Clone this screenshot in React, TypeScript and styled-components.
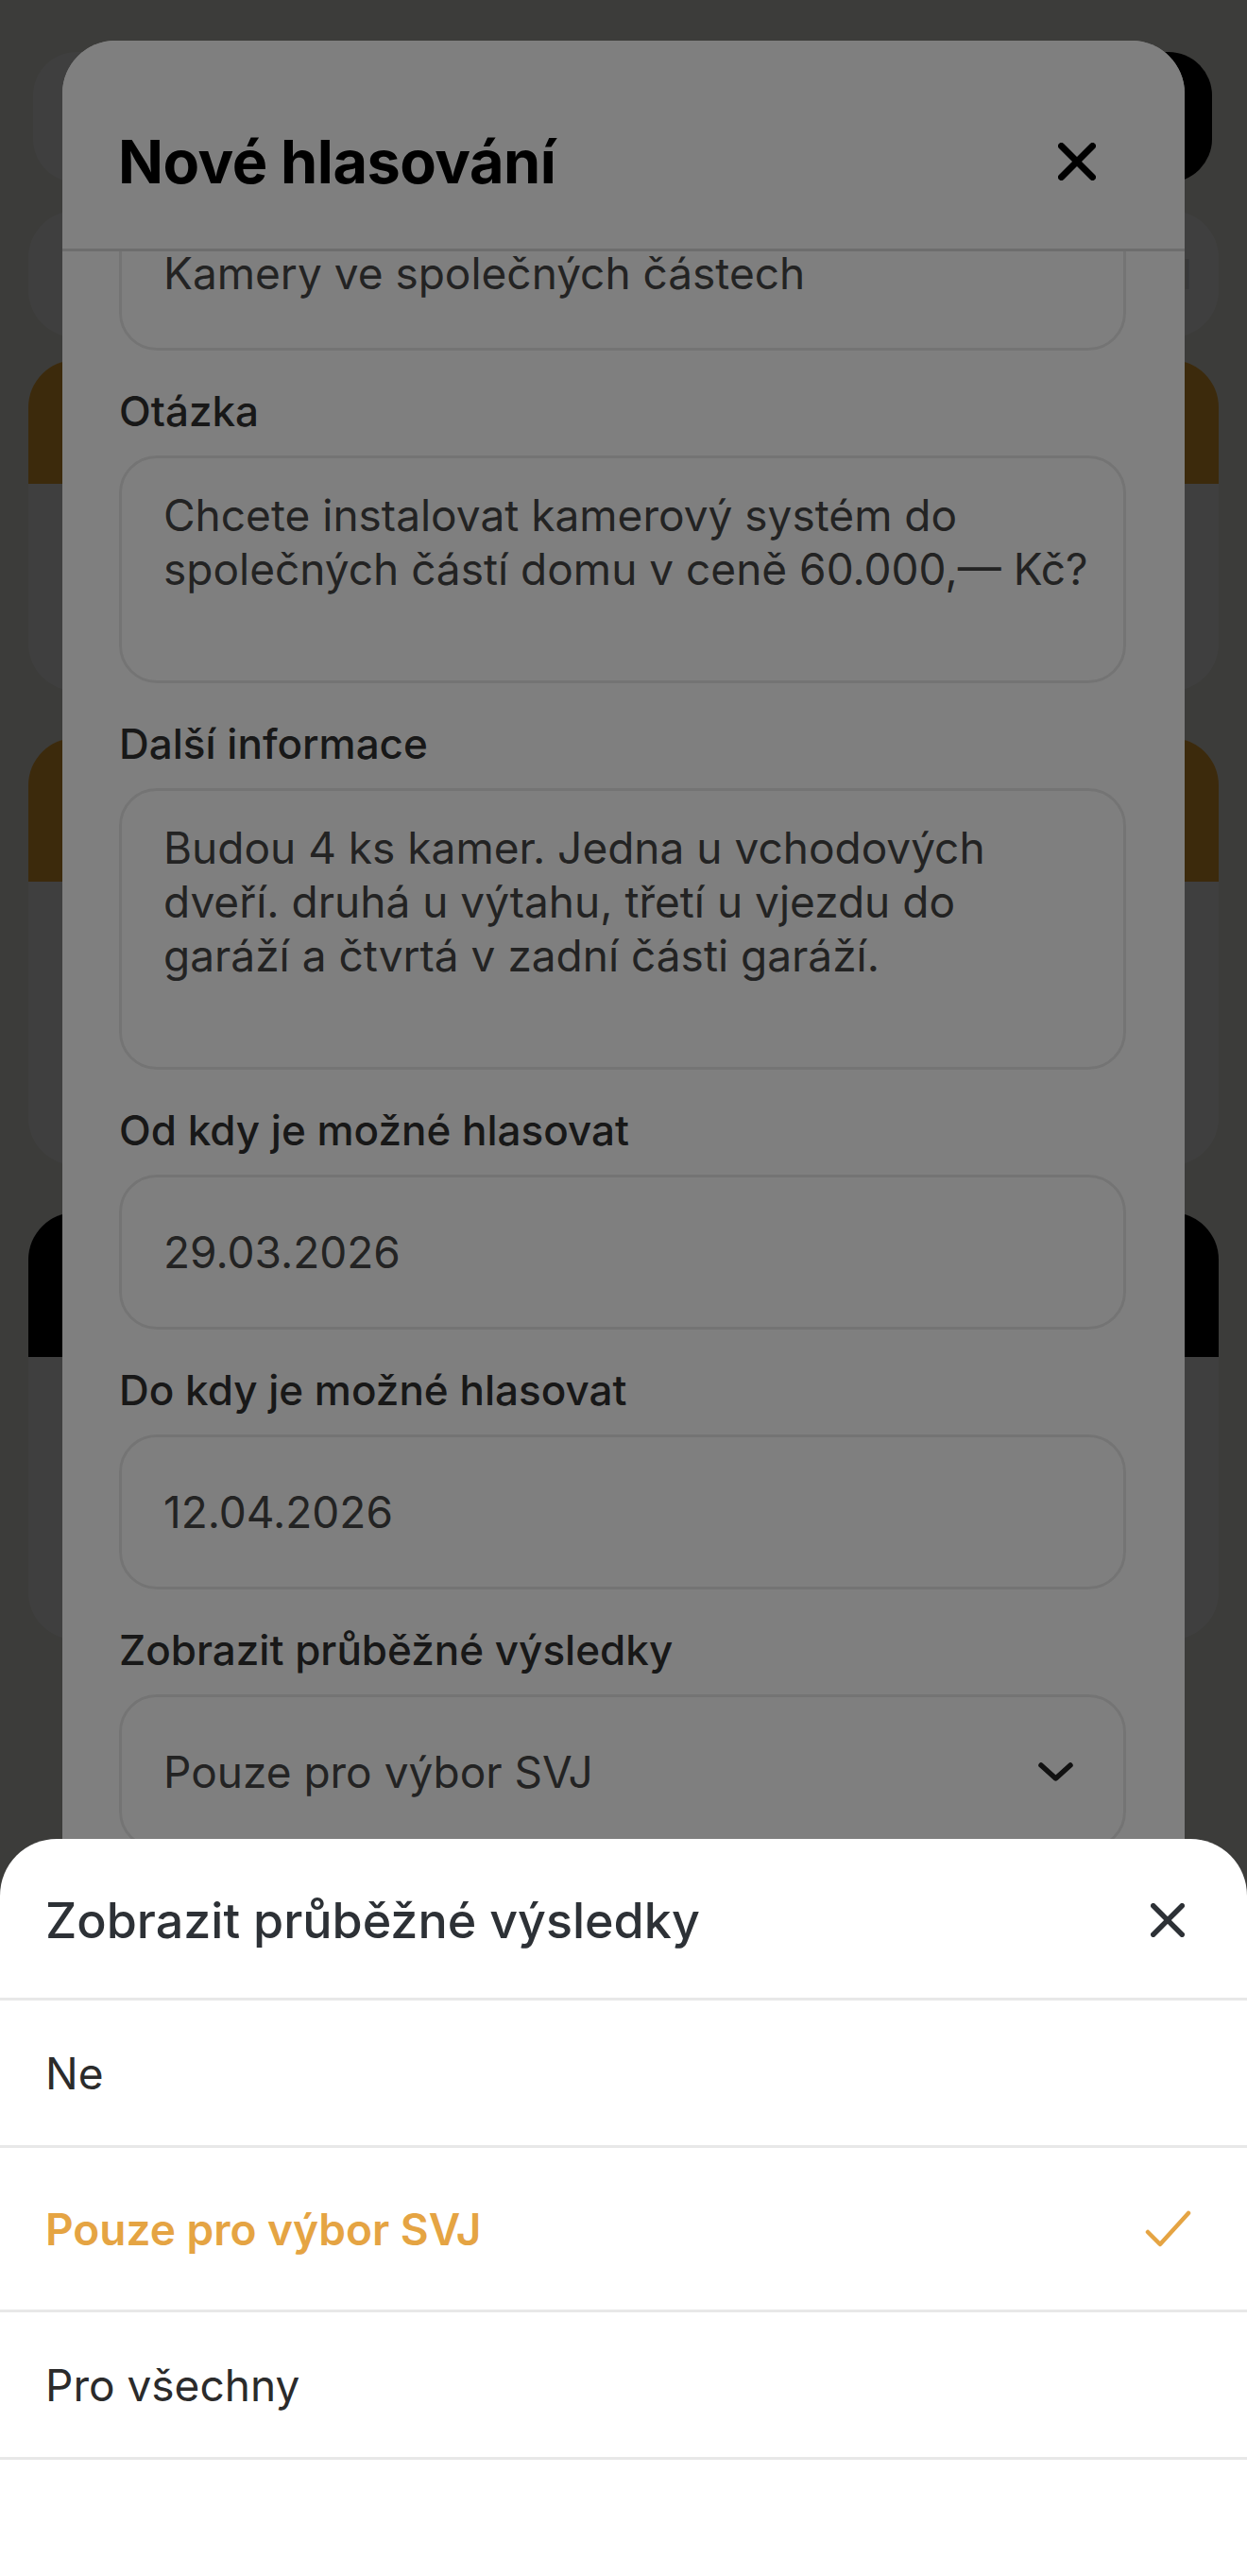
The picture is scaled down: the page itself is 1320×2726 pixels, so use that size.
import React from 'react';
import styled, { createGlobalStyle } from 'styled-components';

const GlobalStyle = createGlobalStyle`
  * {
    box-sizing: border-box;
  }

  body {
    margin: 0;
    background: #000;
    font-family: Inter, 'Liberation Sans', 'Noto Sans', sans-serif;
  }
`;

const Screen = styled.div`
  position: relative;
  width: 1320px;
  height: 2726px;
  overflow: hidden;
  background: #f0f0e8;
`;

/* page under the modal */

const Home = styled.div`
  display: flex;
  flex-direction: column;
  padding: 55px 30px 0;
`;

const TopBar = styled.div`
  display: flex;
  align-items: center;
  justify-content: space-between;
  height: 138px;
  padding: 0 7px 0 5px;
`;

const BackBox = styled.div`
  width: 320px;
  height: 138px;
  border-radius: 46px;
  background: #fdfdfd;
`;

const NewButton = styled.div`
  width: 280px;
  height: 138px;
  border-radius: 46px;
  background: #000;
`;

const Tabs = styled.div`
  margin-top: 30px;
  height: 134px;
  border-radius: 50px;
  background: #fff;
  display: flex;
  align-items: center;
  justify-content: flex-end;
  padding-right: 28px;
  font-size: 44px;
  color: #e0e0e0;
`;

const CardList = styled.div`
  display: flex;
  flex-direction: column;
  gap: 50px;
  margin-top: 24px;
`;

const Card = styled.div`
  border-radius: 50px;
  overflow: hidden;
  background: #fff;
`;

const CardHead = styled.div<{ $tone: string; $h: number }>`
  height: ${(p) => p.$h}px;
  background: ${(p) => p.$tone};
`;

const CardBody = styled.div<{ $h: number }>`
  height: ${(p) => p.$h}px;
`;

const Backdrop = styled.div`
  position: absolute;
  inset: 0;
  background: rgba(0, 0, 0, 0.5);
`;

/* modal */

const Modal = styled.div`
  position: absolute;
  z-index: 0;
  left: 66px;
  top: 43px;
  width: 1188px;
  bottom: -80px;
  background: #fff;
  border-radius: 56px;
  display: flex;
  flex-direction: column;
  overflow: hidden;
`;

const ModalHeader = styled.div`
  position: relative;
  z-index: 1;
  flex: none;
  height: 223px;
  padding: 36px 94px 0 59px;
  display: flex;
  align-items: center;
  justify-content: space-between;
  background: #fff;
  border-bottom: 3px solid #dadada;
`;

const ModalTitle = styled.h1`
  margin: 0;
  font-size: 63px;
  font-weight: 700;
  letter-spacing: -0.5px;
  color: #000;
`;

/* the body is scrolled down a little, so the first field sits under the header */
const ModalBody = styled.div`
  flex: 1;
  min-height: 0;
  overflow: hidden;
`;

const Form = styled.div`
  display: flex;
  flex-direction: column;
  gap: 38px;
  margin-top: -99px;
  padding: 40px 62px 400px 60px;
`;

const Field = styled.div`
  display: flex;
  flex-direction: column;
`;

const Label = styled.div`
  font-size: 44px;
  font-weight: 500;
  line-height: 52px;
  color: #303030;
  margin-bottom: 21px;
`;

const Box = styled.div`
  border: 3px solid #e9e9e9;
  border-radius: 40px;
  background: #fff;
  font-size: 46px;
  line-height: 57px;
  color: #474747;
`;

const InputBox = styled(Box)`
  height: 164px;
  padding: 0 30px 0 44px;
  display: flex;
  align-items: center;
  justify-content: space-between;
`;

const AreaBox = styled(Box)<{ $rows: number }>`
  min-height: ${(p) => p.$rows * 57 + 64 + 6}px;
  padding: 32px 24px 32px 44px;
  white-space: pre-line;
`;

const Chevron = styled.svg`
  width: 41px;
  height: 24px;
  margin-right: 21px;
`;

/* bottom sheet */

const Sheet = styled.div`
  position: absolute;
  left: 0;
  right: 0;
  top: 1946px;
  bottom: 0;
  background: #fff;
  border-radius: 60px 60px 0 0;
`;

const SheetHeader = styled.div`
  height: 171px;
  padding: 4px 66px 0 48px;
  display: flex;
  align-items: center;
  justify-content: space-between;
  border-bottom: 3px solid #e8e8e8;
`;

const SheetTitle = styled.div`
  font-size: 52px;
  font-weight: 500;
  color: #2d3136;
`;

const Option = styled.div<{ $selected?: boolean }>`
  height: ${(p) => (p.$selected ? 174 : 156)}px;
  padding: 0 59px 0 48px;
  display: flex;
  align-items: center;
  justify-content: space-between;
  border-bottom: 3px solid #e8e8e8;
  font-size: 46px;
  font-weight: ${(p) => (p.$selected ? 600 : 400)};
  color: ${(p) => (p.$selected ? '#e5a443' : '#2b2b2b')};
`;

const CloseIcon = ({ size, stroke, color }: { size: number; stroke: number; color: string }) => {
  const a = stroke / 2;
  const b = size - stroke / 2;
  return (
    <svg width={size} height={size} viewBox={`0 0 ${size} ${size}`}>
      <g stroke={color} strokeWidth={stroke} strokeLinecap="round">
        <line x1={a} y1={a} x2={b} y2={b} />
        <line x1={b} y1={a} x2={a} y2={b} />
      </g>
    </svg>
  );
};

const CheckIcon = () => (
  <svg width="50" height="42" viewBox="0 0 50 42">
    <polyline
      points="4,24 17,37 47,4"
      fill="none"
      stroke="#e5a443"
      strokeWidth="4.5"
      strokeLinecap="round"
      strokeLinejoin="round"
    />
  </svg>
);

const cards = [
  { tone: '#f0a830', head: 131, body: 219 },
  { tone: '#f0a830', head: 152, body: 300 },
  { tone: '#000', head: 153, body: 299 },
];

const options = ['Ne', 'Pouze pro výbor SVJ', 'Pro všechny'];
const selected = 'Pouze pro výbor SVJ';

export default function App() {
  return (
    <Screen>
      <GlobalStyle />

      <Home>
        <TopBar>
          <BackBox />
          <NewButton />
        </TopBar>
        <Tabs>Protokol</Tabs>
        <CardList>
          {cards.map((c, i) => (
            <Card key={i}>
              <CardHead $tone={c.tone} $h={c.head} />
              <CardBody $h={c.body} />
            </Card>
          ))}
        </CardList>
      </Home>

      <Backdrop />

      <Modal>
        <ModalHeader>
          <ModalTitle>Nové hlasování</ModalTitle>
          <CloseIcon size={40} stroke={7} color="#000" />
        </ModalHeader>
        <ModalBody>
          <Form>
            <Field>
              <InputBox>Kamery ve společných částech</InputBox>
            </Field>
            <Field>
              <Label>Otázka</Label>
              <AreaBox $rows={3}>
                {'Chcete instalovat kamerový systém do\nspolečných částí domu v ceně 60.000,— Kč?'}
              </AreaBox>
            </Field>
            <Field>
              <Label>Další informace</Label>
              <AreaBox $rows={4}>
                {'Budou 4 ks kamer. Jedna u vchodových\ndveří. druhá u výtahu, třetí u vjezdu do\ngaráží a čtvrtá v zadní části garáží.'}
              </AreaBox>
            </Field>
            <Field>
              <Label>Od kdy je možné hlasovat</Label>
              <InputBox>29.03.2026</InputBox>
            </Field>
            <Field>
              <Label>Do kdy je možné hlasovat</Label>
              <InputBox>12.04.2026</InputBox>
            </Field>
            <Field>
              <Label>Zobrazit průběžné výsledky</Label>
              <InputBox>
                Pouze pro výbor SVJ
                <Chevron viewBox="0 0 41 24">
                  <polyline
                    points="5,5 20.5,19 36,5"
                    fill="none"
                    stroke="#222"
                    strokeWidth="5.5"
                    strokeLinecap="round"
                    strokeLinejoin="round"
                  />
                </Chevron>
              </InputBox>
            </Field>
          </Form>
        </ModalBody>
      </Modal>

      <Backdrop />

      <Sheet>
        <SheetHeader>
          <SheetTitle>Zobrazit průběžné výsledky</SheetTitle>
          <CloseIcon size={36} stroke={5.5} color="#2d3136" />
        </SheetHeader>
        {options.map((o) => (
          <Option key={o} $selected={o === selected}>
            {o}
            {o === selected && <CheckIcon />}
          </Option>
        ))}
      </Sheet>
    </Screen>
  );
}
